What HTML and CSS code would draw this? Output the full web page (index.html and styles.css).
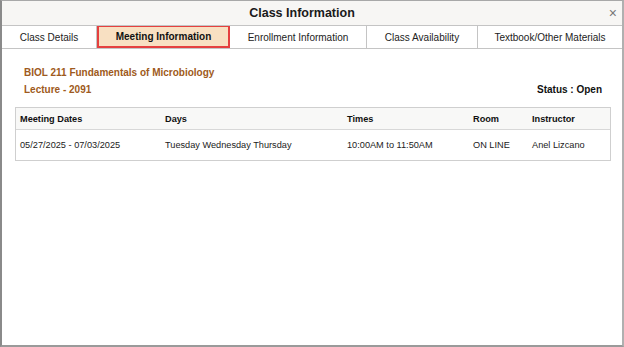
FILE: index.html
```html
<!DOCTYPE html>
<html>
<head>
<meta charset="utf-8">
<link rel="stylesheet" href="styles.css">
</head>
<body>
<div class="dialog">
  <div class="titlebar">
    <span class="title">Class Information</span>
    <span class="close">×</span>
  </div>
  <div class="tabs">
    <div class="tab t1">Class Details</div>
    <div class="tab t2 active">Meeting Information</div>
    <div class="tab t3">Enrollment Information</div>
    <div class="tab t4">Class Availability</div>
    <div class="tab t5">Textbook/Other Materials</div>
  </div>
  <div class="content">
    <div class="course">BIOL 211 Fundamentals of Microbiology</div>
    <div class="line2">
      <span class="course">Lecture - 2091</span>
      <span class="status">Status : Open</span>
    </div>
    <div class="table">
      <div class="row head">
        <div class="c1">Meeting Dates</div>
        <div class="c2">Days</div>
        <div class="c3">Times</div>
        <div class="c4">Room</div>
        <div class="c5">Instructor</div>
      </div>
      <div class="row data">
        <div class="c1">05/27/2025 - 07/03/2025</div>
        <div class="c2">Tuesday Wednesday Thursday</div>
        <div class="c3">10:00AM to 11:50AM</div>
        <div class="c4">ON LINE</div>
        <div class="c5">Anel Lizcano</div>
      </div>
    </div>
  </div>
</div>
</body>
</html>
```

FILE: styles.css
```css
* { box-sizing: border-box; }
html, body { margin: 0; padding: 0; background: #fff; }
body { font-family: "Liberation Sans", Arial, sans-serif; color: #222; }
.dialog {
  width: 624px;
  height: 347px;
  border-left: 2px solid #8a8a8a;
  border-right: 2px solid #b0b0b0;
  border-top: 1px solid #a8a8a8;
  border-bottom: 2px solid #9a9a9a;
  display: flex;
  flex-direction: column;
}
.titlebar {
  height: 25px;
  background: #f7f6f4;
  border-bottom: 1px solid #c4c4c4;
  display: flex;
  align-items: center;
  justify-content: center;
  padding-right: 20px;
  position: relative;
}
.title { font-size: 12.5px; font-weight: bold; color: #1a1a1a; }
.close {
  position: absolute;
  right: 5px;
  top: 4px;
  font-size: 14px;
  color: #777;
}
.tabs {
  display: flex;
  height: 23px;
  border-bottom: 1px solid #c4c4c4;
  font-size: 10px;
}
.tab {
  display: flex;
  align-items: center;
  justify-content: center;
  border-right: 1px solid #c4c4c4;
  color: #222;
}
.t1 { width: 95px; }
.t2 { width: 133px; }
.t3 { width: 137px; }
.t4 { width: 111px; }
.t5 { flex: 1; border-right: none; }
.tab.active {
  background: #f8e0c2;
  border: 2px solid #e5403f;
  font-weight: bold;
  color: #111;
  margin-top: -1px;
  height: 23px;
}
.content { padding: 18px 20px 0 13px; }
.course {
  color: #9e5a20;
  font-weight: bold;
  font-size: 10px;
  padding-left: 9px;
}
.content > .course { margin-bottom: 6px; }
.line2 {
  display: flex;
  justify-content: space-between;
  align-items: center;
}
.status { font-weight: bold; font-size: 10px; color: #111; }
.table {
  margin-top: 12px;
  width: 596px;
  border: 1px solid #cfcfcf;
  font-size: 9.2px;
}
.row { display: flex; align-items: center; }
.row.head {
  height: 22px;
  background: #f8f8f7;
  border-bottom: 1px solid #d8d8d8;
  font-weight: bold;
  color: #111;
}
.row.data { height: 30px; color: #222; }
.c1 { width: 149px; padding-left: 4px; }
.c2 { width: 182px; }
.c3 { width: 126px; }
.c4 { width: 59px; }
.c5 { flex: 1; }
```
